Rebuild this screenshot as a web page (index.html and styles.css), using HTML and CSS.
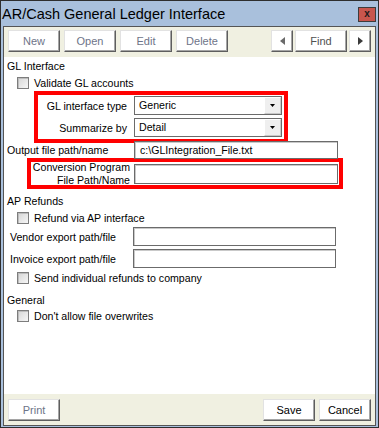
FILE: index.html
```html
<!DOCTYPE html>
<html>

	<head>
		<meta charset="utf-8" />
		<title>AR/Cash General Ledger Interface</title>
		<link rel="stylesheet" href="styles.css">
	</head>

	<body>
		<div class="window">
			<div class="titlebar">
				<span class="title">AR/Cash General Ledger Interface</span>
				<span class="close">x</span>
			</div>
			<div class="panel">
				<!-- record toolbar -->
				<div class="toolbar">
					<button class="btn dim">New</button>
					<button class="btn dim">Open</button>
					<button class="btn dim">Edit</button>
					<button class="btn dim">Delete</button>
					<div class="spacer"></div>
					<div class="nav">
						<button class="btn arrow">
							<svg width="5" height="8" viewBox="0 0 5 8"><polygon points="5,0 5,8 0,4" fill="#6a6a6a" /></svg>
						</button>
						<button class="btn find">Find</button>
						<button class="btn arrow">
							<svg width="5" height="8" viewBox="0 0 5 8"><polygon points="0,0 0,8 5,4" fill="#3a3a3a" /></svg>
						</button>
					</div>
				</div>

				<div class="form">
					<div class="heading">GL Interface</div>
					<div class="check"><span class="box"></span>Validate GL accounts</div>

					<div class="mark mark_gl">
						<div class="row">
							<span class="label">GL interface type</span>
							<div class="select">
								<span class="value">Generic</span>
								<span class="drop"><svg width="5" height="3" viewBox="0 0 5 3"><polygon points="0,0 5,0 2.5,3" fill="#000" /></svg></span>
							</div>
						</div>
						<div class="row">
							<span class="label">Summarize by</span>
							<div class="select">
								<span class="value">Detail</span>
								<span class="drop"><svg width="5" height="3" viewBox="0 0 5 3"><polygon points="0,0 5,0 2.5,3" fill="#000" /></svg></span>
							</div>
						</div>
					</div>

					<div class="field output">
						<span class="label">Output file path/name</span>
						<div class="input">c:\GLIntegration_File.txt</div>
					</div>

					<div class="mark mark_conv">
						<span class="label">Conversion Program<br>File Path/Name</span>
						<div class="input"></div>
					</div>

					<div class="heading ap">AP Refunds</div>
					<div class="check"><span class="box"></span>Refund via AP interface</div>
					<div class="field export">
						<span class="label">Vendor export path/file</span>
						<div class="input"></div>
					</div>
					<div class="field export">
						<span class="label">Invoice export path/file</span>
						<div class="input"></div>
					</div>
					<div class="check"><span class="box"></span>Send individual refunds to company</div>

					<div class="heading general">General</div>
					<div class="check"><span class="box"></span>Don't allow file overwrites</div>
				</div>

				<div class="footer">
					<button class="btn dim">Print</button>
					<div class="spacer"></div>
					<button class="btn">Save</button>
					<button class="btn">Cancel</button>
				</div>
			</div>
		</div>
	</body>

</html>
```

FILE: styles.css
```css
* {
	margin: 0;
	padding: 0;
	box-sizing: border-box;
}

body {
	font-family: "Liberation Sans", Arial, sans-serif;
	font-size: 10.6px;
	color: #000;
	background: #fff;
}

.window {
	width: 379px;
	height: 428px;
	display: flex;
	flex-direction: column;
	border: 1px solid #2e2e2e;
	background: #a9c0dc;
	padding: 0 2px 1px 2px;
}

.titlebar {
	height: 25px;
	display: flex;
	align-items: center;
	justify-content: space-between;
	padding: 0 2px 0 1px;
	margin: 0 -2px;
}

.title {
	font-size: 14.5px;
	color: #000;
	padding-top: 1px;
}

.close {
	width: 18px;
	height: 15px;
	margin-top: 2px;
	background: #c8564d;
	border: 1px solid #3c3c3c;
	font-size: 10px;
	font-weight: bold;
	line-height: 11px;
	text-align: center;
	color: #1a1a1a;
}

.panel {
	flex: 1;
	display: flex;
	flex-direction: column;
	border: 1px solid #555;
}

.toolbar {
	height: 30px;
	display: flex;
	gap: 4px;
	padding: 3px 4px 0 4px;
	background: #f0f0e1;
}

.footer {
	height: 31px;
	display: flex;
	gap: 4px;
	padding: 5px 4px 0 4px;
	background: #f0f0e1;
}

.spacer {
	flex: 1;
}

.nav {
	display: flex;
	gap: 2px;
}

.btn {
	width: 52px;
	height: 22px;
	font-family: inherit;
	font-size: 11px;
	color: #000;
	background: #fff;
	border: 1px solid #e2e2e2;
	border-right-color: #5e5e5e;
	border-bottom-color: #5e5e5e;
	box-shadow: inset -1px -1px 0 #a5a5a5;
	display: flex;
	align-items: center;
	justify-content: center;
	padding-bottom: 1px;
}

.btn.dim {
	color: #6e7488;
}

.btn.find {
	color: #505050;
}

.btn.arrow {
	width: 22px;
}

.form {
	flex: 1;
	background: #fff;
	padding-left: 3px;
}

.heading {
	height: 18px;
	line-height: 18px;
}

.heading.ap {
	margin-top: 3px;
}

.heading.general {
	height: 16px;
	line-height: 16px;
	margin-top: 6px;
}

.check {
	height: 16px;
	display: flex;
	align-items: center;
	gap: 5px;
	padding-left: 10px;
}

.check .box {
	width: 12px;
	height: 12px;
	border: 1px solid #7d7d7d;
	background: linear-gradient(135deg, #d6d6d6, #f6f6f6);
	box-shadow: inset 1px 1px 0 #bdbdbd;
}

/* red annotation frames */
.mark {
	border: 4px solid #f00;
}

.mark_gl {
	width: 254px;
	height: 52px;
	margin-left: 27px;
	padding-top: 1px;
	display: flex;
	flex-direction: column;
	gap: 3px;
}

.mark_gl .row {
	height: 19px;
	display: flex;
	align-items: center;
}

.mark_gl .label {
	width: 89px;
	margin-right: 7px;
	text-align: right;
	white-space: nowrap;
}

.select {
	width: 148px;
	height: 19px;
	display: flex;
	border: 1px solid #6b6b6b;
	background: #fff;
}

.select .value {
	flex: 1;
	padding-left: 4px;
	line-height: 17px;
}

.select .drop {
	width: 17px;
	display: flex;
	align-items: center;
	justify-content: center;
	background: #efefef;
	border: 1px solid #fff;
	border-right-color: #c8c8c8;
	border-bottom-color: #c8c8c8;
}

.input {
	height: 19px;
	border: 1px solid #6b6b6b;
	box-shadow: inset 1px 1px 0 #c9c9c9;
	background: #fff;
	padding-left: 4px;
	line-height: 16px;
	white-space: nowrap;
	overflow: hidden;
}

.field {
	display: flex;
}

.output {
	height: 18px;
	margin-top: -2px;
	align-items: center;
}

.output .label {
	width: 127px;
}

.output .input {
	width: 204px;
	height: 18px;
	padding-left: 5px;
}

.mark_conv {
	width: 316px;
	height: 31px;
	margin-top: -1px;
	margin-left: 20px;
	display: flex;
	align-items: center;
}

.mark_conv .label {
	width: 99px;
	margin-right: 4px;
	text-align: right;
	line-height: 13px;
	white-space: nowrap;
}

.mark_conv .input {
	width: 204px;
	height: 20px;
}

.export {
	height: 22px;
	align-items: flex-start;
}

.export .label {
	width: 126px;
	padding-left: 3px;
	line-height: 22px;
}

.export .input {
	width: 203px;
	margin-top: 1px;
}
```
